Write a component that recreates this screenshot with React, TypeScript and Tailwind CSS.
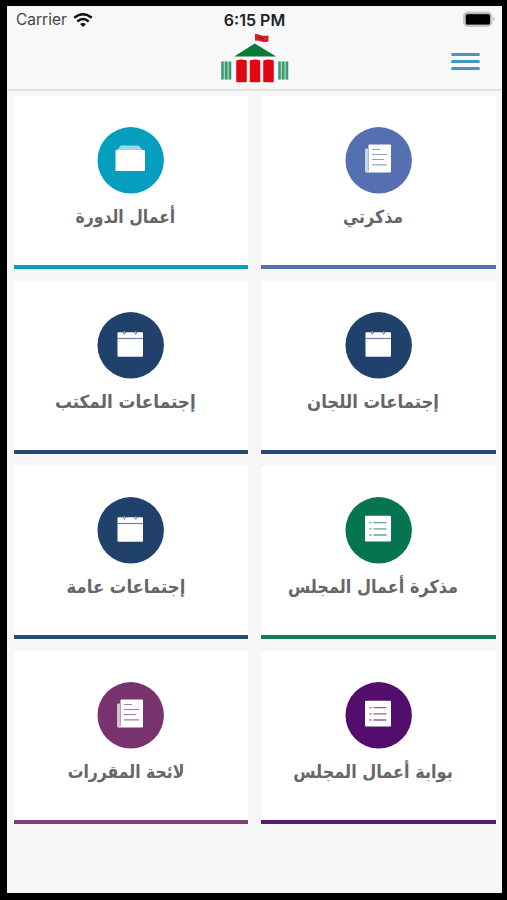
type IconName = "folder" | "note" | "calendar" | "list";

interface Tile {
  label: string;
  icon: IconName;
  circle: string;
  border: string;
  width: string;
}

const tiles: Tile[] = [
  { label: "مذكرتي", icon: "note", circle: "text-[#5470b1]", border: "border-[#5470b1]", width: "scale-x-[0.88]" },
  { label: "أعمال الدورة", icon: "folder", circle: "text-[#049fbe]", border: "border-[#049fbe]", width: "scale-x-[0.87]" },
  { label: "إجتماعات اللجان", icon: "calendar", circle: "text-[#1f416b]", border: "border-[#264a75]", width: "scale-x-[0.915]" },
  { label: "إجتماعات المكتب", icon: "calendar", circle: "text-[#1f416b]", border: "border-[#264a75]", width: "scale-x-[0.935]" },
  { label: "مذكرة أعمال المجلس", icon: "list", circle: "text-[#057551]", border: "border-[#157a58]", width: "scale-x-[0.895]" },
  { label: "إجتماعات عامة", icon: "calendar", circle: "text-[#1f416b]", border: "border-[#264a75]", width: "scale-x-[0.915]" },
  { label: "بوابة أعمال المجلس", icon: "list", circle: "text-[#530d6c]", border: "border-[#55196d]", width: "scale-x-[0.895]" },
  { label: "لائحة المقررات", icon: "note", circle: "text-[#78336e]", border: "border-[#7d3f78]", width: "scale-x-[0.87]" },
];

const TileIcon = ({ name }: { name: IconName }) => (
  <svg viewBox="0 0 67 67" className="size-[67px]" fill="none">
    <circle cx="33.7" cy="33.3" r="33.2" fill="currentColor" />
    {name === "folder" && (
      <>
        <path d="M24 18.500h17.500l4.500 5H19.500z" fill="#fff" opacity=".6" />
        <rect x="18.500" y="23" width="29.500" height="21" rx="1" fill="#fff" />
      </>
    )}
    {name === "note" && (
      <>
        <path d="M20 22.500a1 1 0 0 1 1-1h2v24h-1.500a1.500 1.500 0 0 1-1.500-1.500z" fill="#fff" opacity=".7" />
        <path d="M24 17.500h21a1 1 0 0 1 1 1v26a1 1 0 0 1-1 1H21.500q2 0 2-2V18z" fill="#fff" />
        <path d="M27 22.500h8M27 27.500h15M27 32.500h12M27 37.800h15" stroke="currentColor" strokeWidth="1.200" opacity=".65" />
      </>
    )}
    {name === "calendar" && (
      <>
        <rect x="20.500" y="20.300" width="25.500" height="24.500" rx="1" fill="#fff" />
        <path d="M20.500 26.500h25.500" stroke="currentColor" strokeWidth="1.200" opacity=".65" />
        <path d="M25.500 20h3.500l-1.700 3.300zM37 20h3.500l-1.700 3.300z" fill="currentColor" opacity=".7" />
        <path d="M27.200 19v3M38.800 19v3" stroke="#fff" strokeWidth="1" opacity=".6" />
      </>
    )}
    {name === "list" && (
      <>
        <rect x="20" y="18.700" width="26" height="25.800" rx="1" fill="#fff" />
        <path d="M28.500 25.700h13M28.500 31.800h13M28.500 38h13M24.500 25.700h2M24.500 31.800h2M24.500 38h2" stroke="currentColor" strokeWidth="1.300" opacity=".65" />
      </>
    )}
  </svg>
);

const Logo = () => (
  <svg viewBox="0 0 68 50" className="h-[50px] w-[68px]">
    <path d="M34 0q3 0 6 1.300 3 1 7.500.2v6q-4 1-7 0-3-1-6.500-1z" fill="#d91e27" />
    <path d="M38 3.800q2.500-.5 4.500 1.200" stroke="#7d2018" strokeWidth="1.800" fill="none" />
    <path d="M33.700 9.500 55.200 22.500H13.200z" fill="#087a39" />
    <path d="M16 27q4.500-1.500 9 0V47.500h-9zM29.500 27q4.500-1.500 9 0V47.500h-9zM43 27q4.500-1.500 9 0V47.500h-9z" fill="#e00612" stroke="#e00612" strokeWidth="1.500" strokeLinejoin="round" />
    <path d="M.3 27.500h9.900v18H.3zM57.300 27.500h9.900v18h-9.900z" fill="#a9d3be" />
    <path d="M1.500 27.500v18M5.200 27.500v18M9 27.500v18M58.500 27.500v18M62.200 27.500v18M66 27.500v18" stroke="#3b9a70" strokeWidth="2.400" />
  </svg>
);

const StatusBar = () => (
  <div className="grid h-7 grid-cols-3 items-center">
    <div className="flex items-center gap-[6px] pl-[9px]">
      <span className="font-['Inter'] text-[15.500px] leading-none text-[#444]">Carrier</span>
      <svg viewBox="0 0 20 15" className="h-[15px] w-5" fill="none" stroke="#111">
        <path d="M1.200 4.800q8.800-7 17.600 0" strokeWidth="2.500" />
        <path d="M4.300 8.500q5.700-4.800 11.400 0" strokeWidth="2.400" />
        <path d="m10 14-3-3q3-2.200 6 0z" fill="#111" stroke="none" />
      </svg>
    </div>
    <span className="text-center font-['Inter'] text-[16px] font-semibold leading-none text-[#222]">
      6:15 PM
    </span>
    <div className="flex items-center justify-end pr-[6px]">
      <svg viewBox="0 0 34 16" className="mb-[3px] h-4 w-[34px]">
        <rect x="2" y="1.500" width="27.500" height="13.500" rx="4" fill="#999" stroke="#c7c7c7" strokeWidth="2" />
        <rect x="4" y="3.300" width="24" height="10.200" rx="1.500" fill="#000" />
        <path d="M31 6q2 .8 2 2t-2 2z" fill="#c2c2c2" />
      </svg>
    </div>
  </div>
);

const Header = () => (
  <header className="h-[85px] border-b-2 border-[#e2e2e2] bg-[#f8f8f8]">
    <StatusBar />
    <div className="grid h-14 grid-cols-3 items-start">
      <span />
      <div className="flex justify-center">
        <Logo />
      </div>
      <button className="mt-[19px] mr-[22px] flex w-[29px] flex-col gap-[4px] justify-self-end" aria-label="Menu">
        <span className="h-[3px] w-full rounded-sm bg-[#3f97c6]" />
        <span className="h-[3px] w-full rounded-sm bg-[#3f97c6]" />
        <span className="h-[3px] w-full rounded-sm bg-[#3f97c6]" />
      </button>
    </div>
  </header>
);

const TileCard = ({ tile }: { tile: Tile }) => (
  <div className={`flex h-[173px] flex-col items-center border-b-4 bg-white pt-[31px] ${tile.border}`}>
    <div className={tile.circle}>
      <TileIcon name={tile.icon} />
    </div>
    <span
      className={`mt-[9px] mr-[10px] whitespace-nowrap font-['DejaVu_Sans',sans-serif] text-[18px] leading-7 font-bold text-[#666] ${tile.width}`}
    >
      {tile.label}
    </span>
  </div>
);

const App = () => {
  return (
    <div className="h-[900px] w-[507px] bg-black pt-[6px] pl-[7px]">
      <div className="h-[887px] w-[495px] overflow-hidden bg-[#f7f7f7]">
        <Header />
        <main dir="rtl" className="grid grid-cols-2 gap-x-[13px] gap-y-3 px-[6.500px] pt-[5px]">
          {tiles.map((tile) => (
            <TileCard key={tile.label} tile={tile} />
          ))}
        </main>
      </div>
    </div>
  );
};

export default App;
